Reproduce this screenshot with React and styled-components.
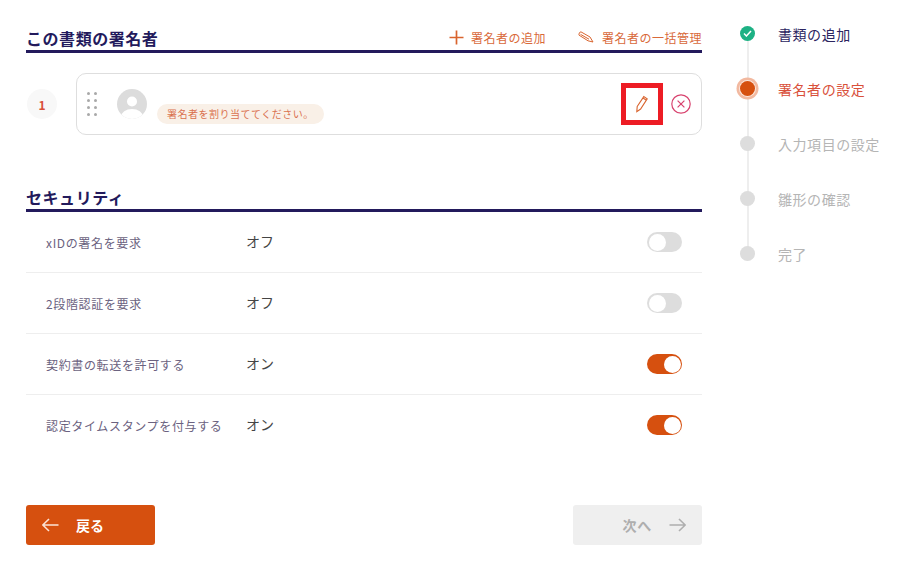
import React from "react";
import styled, {createGlobalStyle} from "styled-components";

const Global = createGlobalStyle`
  html, body {
    margin: 0;
    padding: 0;
    background: #fff;
    font-family: "Noto Sans CJK JP", "Noto Sans", sans-serif;
  }
  * { box-sizing: border-box; }
`;

const Page = styled.div`
  display: flex;
  width: 924px;
  height: 562px;
  overflow: hidden;
  padding-left: 26px;
`;

const Main = styled.div`
  width: 676px;
  padding-top: 26px;
`;

const SectionHead = styled.div`
  display: flex;
  align-items: flex-end;
  justify-content: space-between;
  height: 27px;
  border-bottom: 3px solid #231a5c;
`;

const Title = styled.h2`
  margin: 0;
  font-size: 16px;
  line-height: 24px;
  font-weight: 700;
  letter-spacing: 0.55px;
  color: #231a5c;
`;

const Actions = styled.div`
  display: flex;
  gap: 32px;
  align-self: flex-start;
`;

const Action = styled.div`
  display: flex;
  align-items: center;
  gap: 7px;
  height: 24px;
  margin-top: -1px;
  font-size: 12px;
  letter-spacing: 0.5px;
  color: #d9693a;
`;

const SignerRow = styled.div`
  display: flex;
  align-items: center;
  margin-top: 20px;
`;

const Badge = styled.div`
  width: 30px;
  height: 30px;
  margin: 0 19px 0 1px;
  border-radius: 50%;
  background: #f8f8f8;
  color: #d9503a;
  font-size: 12px;
  font-weight: 700;
  display: flex;
  align-items: center;
  justify-content: center;
`;

const Card = styled.div`
  flex: 1;
  height: 62px;
  display: flex;
  align-items: center;
  padding: 0 10px;
  border: 1px solid #dedede;
  border-radius: 10px;
`;

const Grip = styled.div`
  display: grid;
  grid-template-columns: 3px 3px;
  gap: 4px;
  margin-right: 20px;
  span {
    width: 3px;
    height: 3px;
    border-radius: 50%;
    background: #a9a9a9;
  }
`;

const Assignee = styled.div`
  flex: 1;
  align-self: flex-start;
  display: flex;
  align-items: flex-start;
  gap: 10px;
  padding-top: 15px;
`;

const Avatar = styled.div`
  width: 30px;
  height: 30px;
  border-radius: 50%;
  overflow: hidden;
  background: #dcdcdc;
  svg { display: block; }
`;

const Tag = styled.div`
  margin-top: 15px;
  height: 20px;
  padding: 0 10px;
  border-radius: 10px;
  background: #f9f0e7;
  color: #d9704f;
  font-size: 10px;
  line-height: 20px;
  letter-spacing: 0.5px;
  white-space: nowrap;
`;

const EditBox = styled.div`
  width: 42px;
  height: 42px;
  border: 5px solid #ed1c24;
  display: flex;
  align-items: center;
  justify-content: center;
  margin-right: 8px;
`;

const RemoveIcon = styled.div`
  display: flex;
  width: 20px;
  height: 20px;
`;

const SecuritySection = styled.section`
  margin-top: 50px;
`;

const SettingRow = styled.div`
  display: flex;
  align-items: center;
  height: 61px;
  padding: 0 20px;
  border-bottom: 1px solid ${(props) => (props.last ? "transparent" : "#eeeeee")};
`;

const SettingLabel = styled.div`
  width: 200px;
  font-size: 12px;
  letter-spacing: 0.65px;
  color: #6b6280;
  white-space: nowrap;
`;

const SettingValue = styled.div`
  flex: 1;
  font-size: 14px;
  padding-bottom: 2px;
  color: #444;
`;

const Toggle = styled.div`
  width: 35px;
  height: 20px;
  border-radius: 10px;
  padding: 1.5px;
  display: flex;
  justify-content: ${(props) => (props.on ? "flex-end" : "flex-start")};
  background: ${(props) => (props.on ? "#d6500f" : "#dddddd")};
  span {
    width: 17px;
    height: 17px;
    border-radius: 50%;
    background: #fff;
  }
`;

const Footer = styled.div`
  display: flex;
  justify-content: space-between;
  margin-top: 49px;
`;

const NavButton = styled.div`
  width: 129px;
  height: 40px;
  border-radius: 3px;
  display: flex;
  align-items: center;
  font-size: 14px;
  font-weight: 700;
  background: ${(props) => (props.disabled ? "#efefef" : "#d6500f")};
  color: ${(props) => (props.disabled ? "#aeaeae" : "#fff")};
  justify-content: ${(props) => (props.disabled ? "flex-end" : "flex-start")};
  padding: ${(props) => (props.disabled ? "0 16px 0 0" : "0 0 0 16px")};
  gap: 17px;
  letter-spacing: ${(props) => (props.disabled ? "0.8px" : "0")};
`;

const Stepper = styled.div`
  margin-left: 38px;
  padding-top: 6px;
  display: flex;
  flex-direction: column;
`;

const Step = styled.div`
  position: relative;
  display: flex;
  align-items: center;
  height: 55px;
  &:not(:last-child)::before {
    content: "";
    position: absolute;
    left: 6.5px;
    top: 27px;
    width: 2px;
    height: 55px;
    background: #eeeeee;
  }
`;

const Dot = styled.div`
  position: relative;
  width: 15px;
  height: 15px;
  border-radius: 50%;
  margin-right: 23px;
  display: flex;
  align-items: center;
  justify-content: center;
  background: ${(props) =>
    props.state === "done" ? "#1db184" : props.state === "current" ? "#d6500f" : "#dddddd"};
  box-shadow: ${(props) =>
    props.state === "current" ? "0 0 0 1px #fbe6dc, 0 0 0 3.5px #f2b9a0" : "none"};
`;

const StepLabel = styled.div`
  font-size: 14px;
  letter-spacing: 0.55px;
  white-space: nowrap;
  color: ${(props) =>
    props.state === "done" ? "#2b2560" : props.state === "current" ? "#d9503a" : "#b5b5b5"};
`;

const Arrow = ({color, flip}) => (
  <svg width="17" height="14" viewBox="0 0 17 14" fill="none" stroke={color} strokeWidth="1.6"
    style={flip ? {transform: "scaleX(-1)"} : undefined}>
    <path d="M0.5 7H16M10 1l6.2 6L10 13" />
  </svg>
);

const settings = [
  {label: "xIDの署名を要求", on: false},
  {label: "2段階認証を要求", on: false},
  {label: "契約書の転送を許可する", on: true},
  {label: "認定タイムスタンプを付与する", on: true},
];

const steps = [
  {label: "書類の追加", state: "done"},
  {label: "署名者の設定", state: "current"},
  {label: "入力項目の設定", state: "todo"},
  {label: "雛形の確認", state: "todo"},
  {label: "完了", state: "todo"},
];

function App() {
  return (
    <React.Fragment>
      <Global />
      <Page>
        <Main>
          <SectionHead>
            <Title>この書類の署名者</Title>
            <Actions>
              <Action>
                <svg width="15" height="15" viewBox="0 0 15 15" stroke="#d9642e" strokeWidth="1.7">
                  <path d="M7.5 0.5v14M0.5 7.5h14" />
                </svg>
                署名者の追加
              </Action>
              <Action>
                <svg width="17" height="13" viewBox="0 0 17 13" fill="none" stroke="#d9642e" strokeWidth="1">
                  <path d="M2.95.85 12 6l3 5-5-1.2L1.05 4.15c-.7-.6.9-3.8 1.9-3.3zM2.6 3.4l8.4 4.8" />
                </svg>
                署名者の一括管理
              </Action>
            </Actions>
          </SectionHead>

          <SignerRow>
            <Badge>1</Badge>
            <Card>
              <Grip>
                {Array.from({length: 8}).map((_, i) => <span key={i} />)}
              </Grip>
              <Assignee>
                <Avatar>
                  <svg width="30" height="30" viewBox="0 0 30 30">
                    <circle cx="15" cy="12.5" r="5" fill="#fff" />
                    <ellipse cx="15" cy="28" rx="11" ry="8" fill="#fff" />
                  </svg>
                </Avatar>
                <Tag>署名者を割り当ててください。</Tag>
              </Assignee>
              <EditBox>
                <svg width="14" height="18" viewBox="0 0 14 18" fill="none" stroke="#d9642e" strokeWidth="1.1">
                  <path d="M2.2 11.5 8.8 1.6l3.4 2.2L5.6 14l-3.8 2.6zM8 3l3.4 2.2" />
                </svg>
              </EditBox>
              <RemoveIcon>
                <svg width="20" height="20" viewBox="0 0 20 20" fill="none" stroke="#d8426e" strokeWidth="1.2">
                  <circle cx="10" cy="10" r="9.2" />
                  <path d="M6.6 6.6l6.8 6.8M13.4 6.6l-6.8 6.8" />
                </svg>
              </RemoveIcon>
            </Card>
          </SignerRow>

          <SecuritySection>
            <SectionHead>
              <Title>セキュリティ</Title>
            </SectionHead>
            {settings.map((s, i) => (
              <SettingRow key={s.label} last={i === settings.length - 1}>
                <SettingLabel>{s.label}</SettingLabel>
                <SettingValue>{s.on ? "オン" : "オフ"}</SettingValue>
                <Toggle on={s.on}><span /></Toggle>
              </SettingRow>
            ))}
          </SecuritySection>

          <Footer>
            <NavButton>
              <Arrow color="#fbe3d6" flip />
              戻る
            </NavButton>
            <NavButton disabled>
              次へ
              <Arrow color="#aeaeae" />
            </NavButton>
          </Footer>
        </Main>

        <Stepper>
          {steps.map((s) => (
            <Step key={s.label}>
              <Dot state={s.state}>
                {s.state === "done" && (
                  <svg width="9" height="7" viewBox="0 0 9 7" fill="none" stroke="#fff" strokeWidth="1.5">
                    <path d="M1 3.5 3.4 6 8 1" />
                  </svg>
                )}
              </Dot>
              <StepLabel state={s.state}>{s.label}</StepLabel>
            </Step>
          ))}
        </Stepper>
      </Page>
    </React.Fragment>
  );
}

export default App;
